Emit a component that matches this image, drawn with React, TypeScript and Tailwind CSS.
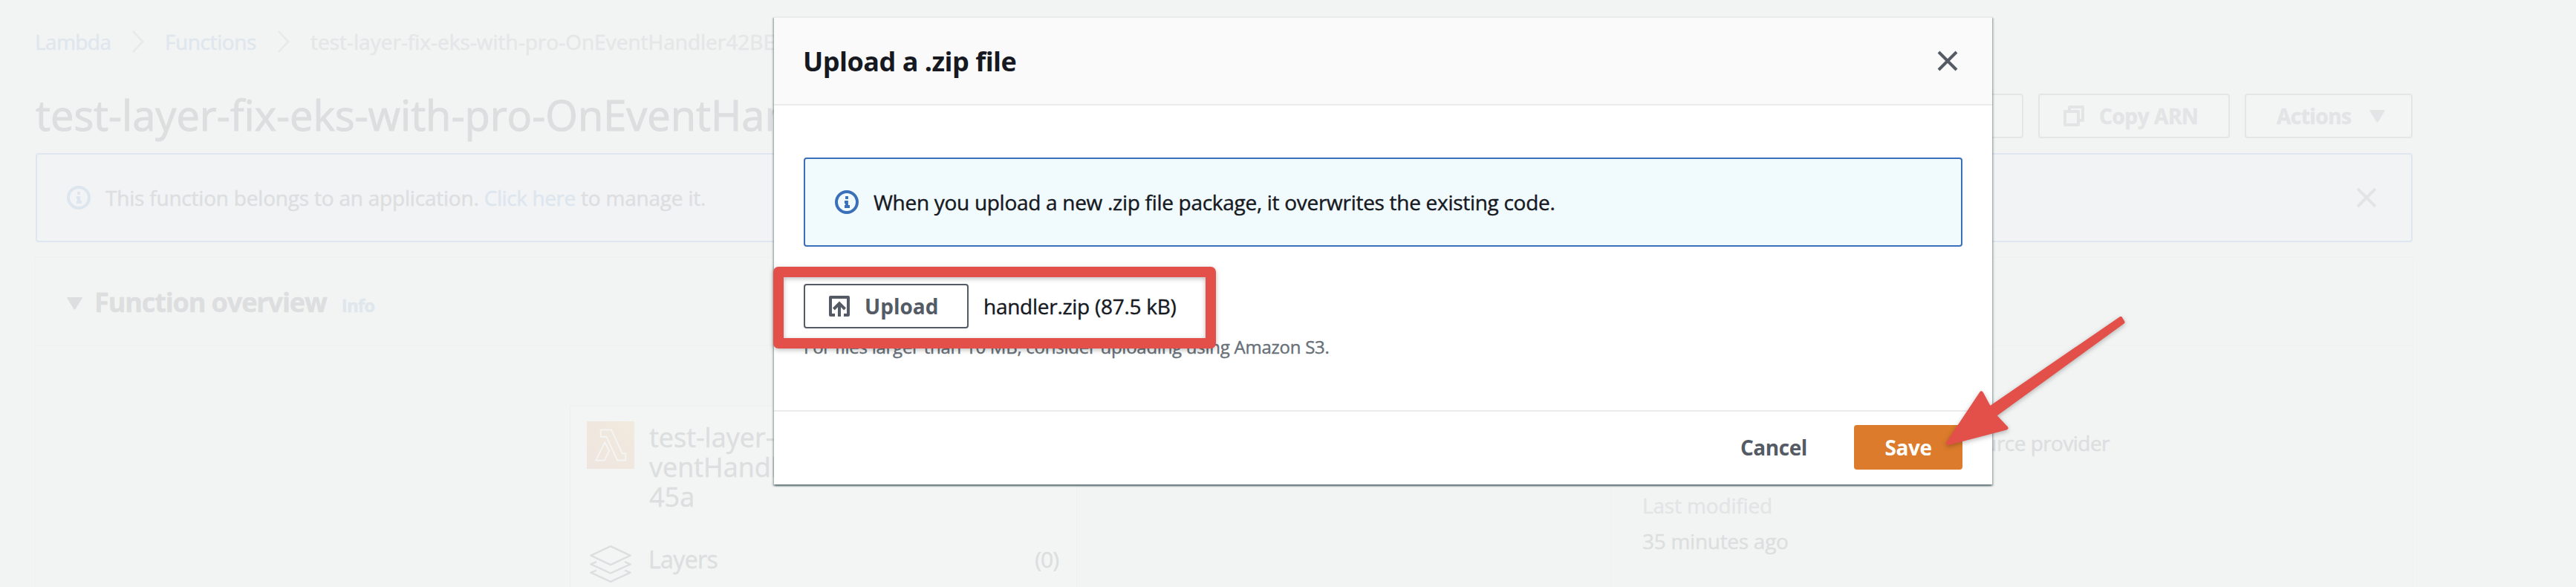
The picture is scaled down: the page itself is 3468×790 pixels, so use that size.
import type { ReactNode } from "react";

function Chevron() {
  return (
    <svg className="h-[30px] w-[18px] shrink-0 fill-none stroke-[#e8eaeb]" viewBox="0 0 18 30" strokeWidth="3">
      <path d="M2 1l13 14L2 29" />
    </svg>
  );
}

function InfoIcon({ className }: { className: string }) {
  return (
    <svg className={`size-8 shrink-0 fill-none ${className}`} viewBox="0 0 16 16" stroke="currentColor" strokeWidth="2">
      <circle cx="8" cy="8" r="7" />
      <path d="M8 11V8H6.5M6.500 11H10M8 6V4" strokeWidth="1.9" />
    </svg>
  );
}

function CloseIcon({ className }: { className: string }) {
  return (
    <svg className={`size-8 shrink-0 fill-none ${className}`} viewBox="0 0 16 16" stroke="currentColor" strokeWidth="2">
      <path d="M2 2l12 12M14 2L2 14" />
    </svg>
  );
}

function UploadIcon() {
  return (
    <svg className="size-8 shrink-0 fill-none" viewBox="0 0 16 16" stroke="currentColor" strokeWidth="2">
      <path d="M5 14H2V2h12v12h-3" strokeLinejoin="round" />
      <path d="M8 15V6.500M4.200 10L8 6.200l3.800 3.800" />
    </svg>
  );
}

function CopyIcon() {
  return (
    <svg className="size-8 shrink-0 fill-none" viewBox="0 0 16 16" stroke="currentColor" strokeWidth="2" strokeLinejoin="round">
      <path d="M2 5h9v9H2z" />
      <path d="M5 4V2h9v9h-2" />
    </svg>
  );
}

function Caret({ className }: { className: string }) {
  return (
    <svg className={`h-[17px] w-[21px] shrink-0 ${className}`} viewBox="0 0 21 17" fill="currentColor">
      <path d="M1.500 0h18q2 0 .9 1.800L11.600 16q-1.100 1.500-2.200 0L.6 1.800Q-.5 0 1.500 0z" />
    </svg>
  );
}

function LambdaIcon() {
  return (
    <svg className="size-16 shrink-0" viewBox="0 0 64 64">
      <defs>
        <linearGradient id="lambda" x1="0" y1="1" x2="1" y2="0">
          <stop offset="0" stopColor="#efe5e0" />
          <stop offset="1" stopColor="#f1eadd" />
        </linearGradient>
      </defs>
      <path fill="url(#lambda)" d="M0 0h64v64H0z" />
      <path
        fill="none"
        stroke="#f4f6f6"
        strokeWidth="1.700"
        d="M18.700 11.500h14.500l14.500 31.800h4.600v9.400H41.200L26.500 20.800h-7.800zM24.200 28.500l6 11-6.600 13.200H12.200z"
      />
    </svg>
  );
}

function LayersIcon() {
  return (
    <svg className="h-[50px] w-14 shrink-0 fill-none stroke-[#dcdee0]" viewBox="0 0 56 50" strokeWidth="2.400" strokeLinejoin="round">
      <path d="M28 1.200L54.500 13.700 28 26.200 1.500 13.700z" />
      <path d="M9 22L1.500 25.300 28 37.500l26.500-12.200L47 22" />
      <path d="M9 33.500l-7.500 3.200L28 48.800l26.500-12.100-7.500-3.200" />
    </svg>
  );
}

function GhostButton({ className, children }: { className: string; children?: ReactNode }) {
  return (
    <div className={`flex h-[60px] shrink-0 items-center rounded-[4px] border-2 border-[#e3e5e6] bg-[#f2f5f4] text-[28px] font-bold text-[#e2e4e6] ${className}`}>
      {children}
    </div>
  );
}

function Background() {
  return (
    <div className="flex w-[3296px] flex-col px-12 pt-[34px] [-webkit-text-stroke:0.4px]">
      <nav className="flex h-11 items-center text-[28px] leading-[44px] text-[#dfe6ee]">
        <span className="-ml-px w-[130px] tracking-[-0.59px]">Lambda</span>
        <Chevron />
        <span className="ml-[27px] w-[151px] tracking-[-0.41px]">Functions</span>
        <Chevron />
        <span className="ml-[27px] whitespace-nowrap text-[#e4e6e7]">
          test-layer-fix-eks-with-pro-OnEventHandler42BE
        </span>
      </nav>

      <header className="mt-12 flex h-[60px] items-center gap-5">
        <h1 className="pb-1 text-[56px] leading-[72px] whitespace-nowrap text-[#dcdedf] [-webkit-text-stroke:1px]">
          test-layer-fix-eks-with-pro-OnEventHandler42BE
        </h1>
        <GhostButton className="ml-auto w-[220px]" />
        <GhostButton className="w-[258px] pl-[30px] tracking-[-0.41px]">
          <CopyIcon />
          <span className="ml-[18px]">Copy ARN</span>
        </GhostButton>
        <GhostButton className="w-[226px] pl-[41px] tracking-[-0.52px]">
          <span>Actions</span>
          <Caret className="ml-[25px]" />
        </GhostButton>
      </header>

      <div className="mt-5 flex h-[120px] items-center rounded-[4px] border-2 border-[#dfe6f0] bg-[#f1f3f5] pr-[44px] pl-10">
        <InfoIcon className="text-[#dde5ee]" />
        <p className="ml-5 text-[28px] leading-[44px] tracking-[-0.21px] whitespace-nowrap text-[#dcdedf]">
          This function belongs to an application.{" "}
          <span className="tracking-[-0.4px] text-[#dde6ee]">Click here</span> to manage it.
        </p>
        <CloseIcon className="ml-auto text-[#e2e4e6]" />
      </div>

      <section className="-mx-px mt-5 h-[460px] border border-[#eff1f1] bg-[#f2f4f3]">
        <div className="flex h-[118px] items-baseline border-b border-[#eff2f1] pt-[38px] pl-[42px] text-[#dcdedf]">
          <Caret className="-translate-y-[3px]" />
          <h2 className="ml-4 text-[36px] leading-[44px] font-bold tracking-[-1.1px]">Function overview</h2>
          <span className="ml-[20px] text-[24px] font-bold tracking-[-0.8px] text-[#dfe6ee]">Info</span>
        </div>
        <div className="flex h-[342px]">
          <div className="mt-[81px] ml-[719px] w-[683px] border border-[#edefef] bg-[#f2f5f4] pr-[21px] pl-[22px] pt-5 text-[#dcdedf]">
            <div className="flex">
              <LambdaIcon />
              <div className="ml-5 pt-0.5 text-[36px] leading-10 whitespace-nowrap">
                <div>test-layer-fix-eks-with-pro-OnE</div>
                <div>ventHandler42BE</div>
                <div>45a</div>
              </div>
            </div>
            <div className="mt-[42px] flex items-start pr-[3px] pl-1 text-[32px] leading-[44px]">
              <div className="pt-[3px]"><LayersIcon /></div>
              <span className="ml-[23px] tracking-[-0.63px]">Layers</span>
              <span className="ml-auto text-[30px] tracking-[-1px]">(0)</span>
            </div>
          </div>
          <div className="ml-[718px] flex flex-1 flex-col border-l border-[#eff2f1] pl-[42px] text-[28px] text-[#dcdedf]">
            <div className="mt-[109px] w-[629px] text-right leading-[44px] tracking-[-0.550px]">source provider</div>
            <div className="mt-[40px] leading-[44px] tracking-[-0.160px] text-[#e2e4e6]">Last modified</div>
            <div className="mt-1 leading-[44px] tracking-[-0.280px]">35 minutes ago</div>
          </div>
        </div>
      </section>
    </div>
  );
}

function UploadDialog() {
  return (
    <div className="absolute top-[22px] left-[1042px] flex h-[630px] w-[1640px] flex-col bg-white text-[#16191f] shadow-[0_2px_2px_0_rgba(0,28,36,0.4),2px_2px_2px_0_rgba(0,28,36,0.2),-2px_2px_2px_0_rgba(0,28,36,0.2)]">
      <div className="flex h-[120px] shrink-0 items-center border-y-2 border-[#ebebeb] bg-[#fafafa] pr-[44px] pl-[39px]">
        <h2 className="pt-0.5 text-[36px] leading-[44px] font-bold tracking-[-0.500px]">Upload a .zip file</h2>
        <CloseIcon className="ml-auto text-[#545b64]" />
      </div>
      <div className="flex flex-1 flex-col px-10 pt-[70px] [-webkit-text-stroke:0.4px]">
        <div className="flex h-[120px] items-center rounded-[4px] border-2 border-[#3a70b9] bg-[#f1fafd] pl-10">
          <InfoIcon className="text-[#3a70b9]" />
          <p className="ml-5 text-[28px] leading-[44px] tracking-[-0.290px] whitespace-nowrap">
            When you upload a new .zip file package, it overwrites the existing code.
          </p>
        </div>
        <div className="mt-[50px] flex items-center text-[28px] leading-[44px]">
          <button className="flex h-[60px] w-[222px] items-center rounded-[4px] border-2 border-[#545b64] pl-[30px] font-bold text-[#545b64] [-webkit-text-stroke:0px]">
            <UploadIcon />
            <span className="ml-[18px]">Upload</span>
          </button>
          <span className="ml-[20px] tracking-[-0.270px]">handler.zip (87.5 kB)</span>
        </div>
        <p className="mt-[5px] text-[24px] leading-[40px] tracking-[-0.254px] text-[#687078]">
          For files larger than 10 MB, consider uploading using Amazon S3.
        </p>
      </div>
      <div className="flex h-[100px] shrink-0 items-center justify-end border-t-2 border-[#ebebeb] pr-10 pb-0.5 text-[28px] leading-[44px] font-bold tracking-[-0.420px]">
        <span className="mr-[63px] text-[#545b64]">Cancel</span>
        <button className="h-[60px] w-[146px] rounded-[4px] bg-[#db7b2b] text-white">Save</button>
      </div>
    </div>
  );
}

export default function App() {
  return (
    <div className="relative h-[790px] w-full overflow-hidden bg-[#f1f4f3] font-['Open_Sans','Noto_Sans',sans-serif]">
      <Background />
      <UploadDialog />
      <div className="absolute top-[359px] left-[1041px] h-[110px] w-[596px] drop-shadow-[0_2px_3px_#00000044]">
        <div className="h-full rounded-[7px] border-[14px] border-[#e3504a]" />
      </div>
      <svg className="absolute top-[410px] left-[2600px] h-[210px] w-[280px] drop-shadow-[0_2px_3px_#00000044]" viewBox="2600 410 280 210">
        <path
          d="M2622.500 596.500L2667.500 529l11 20.500L2855 428.500l3 5L2685 559l16 17z"
          fill="#e3504a"
          stroke="#e3504a"
          strokeWidth="5"
          strokeLinejoin="round"
        />
      </svg>
    </div>
  );
}
